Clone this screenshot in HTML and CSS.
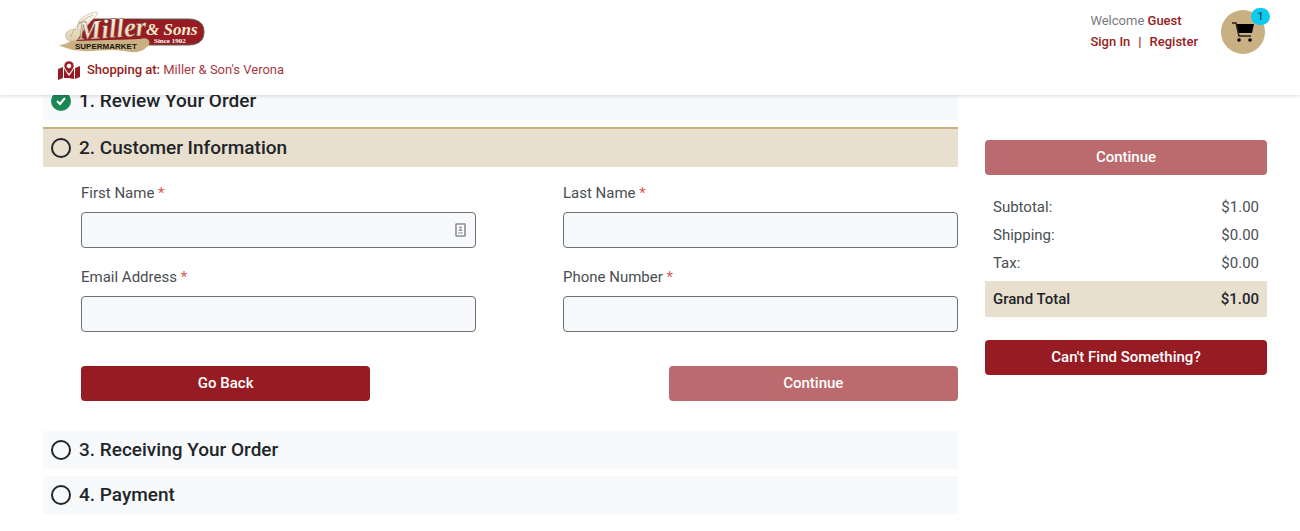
FILE: index.html
```html
<!DOCTYPE html>
<html lang="en">
<head>
  <meta charset="UTF-8">
  <meta name="viewport" content="width=device-width, initial-scale=1.0">
  <title>Checkout - Miller &amp; Sons Supermarket</title>
  <link rel="stylesheet" href="styles.css">
</head>
<body>
  <header class="header">
    <div class="header__brand">
      <a href="/" class="logo" aria-label="Miller &amp; Sons Supermarket">
        <svg width="148" height="44" viewBox="0 0 148 44">
          <defs>
            <linearGradient id="cream" x1="0" y1="0" x2="0" y2="1">
              <stop offset="0" stop-color="#fffdf6" />
              <stop offset="1" stop-color="#dccba8" />
            </linearGradient>
          </defs>
          <path d="M36 9H130C141 9 146 14 146 22C146 30 141 35 130 35H30Z" fill="#971b22" stroke="#56644f" />
          <path d="M1 35C8 35 12 30 20 30L82 29C91 26 94 33 89 37C83 43 75 43 66 41C45 37 24 47 1 35Z" fill="#c9b083" />
          <path d="M26 12L36 9H82V29L18 31Z" fill="#971b22" />
          <path d="M8 27C6 21 14 18 20 20C17 12 26 4 38 2C40 2 40 4 37 7C31 13 25 20 20 29C16 33 9 32 8 27Z" fill="url(#cream)" stroke="#b7a88b" stroke-width="0.6" />
          <path d="M13 27C14 20 24 9 35 5" fill="none" stroke="#b7a88b" stroke-width="0.8" />
          <text class="logo__miller" x="20" y="30" transform="rotate(-4 20 30)">Miller</text>
          <text class="logo__sons" x="88" y="25">&amp; Sons</text>
          <text class="logo__since" x="96" y="33">Since 1902</text>
          <text class="logo__market" x="17" y="39">SUPERMARKET</text>
        </svg>
      </a>
      <a href="/stores" class="store">
        <svg width="22" height="19" viewBox="0 0 22 19" fill="#971b22">
          <path d="M0 8L5 6V17L0 19Z" />
          <path d="M17 7L22 5V16L17 18Z" />
          <path d="M6 7C7 10 9 12 11 15C13 12 15 10 16 7V18L11 17L6 17Z" />
          <path fill-rule="evenodd" d="M11 0C8 0 6 2 6 5C6 7 9 11 11 13C13 11 16 7 16 5C16 2 14 0 11 0ZM11 3A2 2 0 1 1 11 7A2 2 0 1 1 11 3Z" stroke="#fff" stroke-width="0.6" />
        </svg>
        <span><b>Shopping at:</b> Miller &amp; Son's Verona</span>
      </a>
    </div>
    <div class="header__user">
      <div class="account">
        <p>Welcome <b>Guest</b></p>
        <p class="account__links"><a href="/signin">Sign In</a><span>|</span><a href="/register">Register</a></p>
      </div>
      <a href="/cart" class="cart" aria-label="Cart">
        <svg width="23" height="20" viewBox="0 0 23 20">
          <path d="M4 2H22L20 11H6Z" fill="#000" />
          <path d="M0 1H4L7 14H19" fill="none" stroke="#2a2118" stroke-width="1.4" />
          <circle cx="7" cy="18" r="1.8" />
          <circle cx="18" cy="18" r="1.8" />
        </svg>
        <span class="cart__count">1</span>
      </a>
    </div>
  </header>

  <main class="checkout">
    <div class="steps">
      <h2 class="step">
        <svg width="20" height="20" viewBox="0 0 20 20">
          <circle cx="10" cy="10" r="10" fill="#198754" />
          <path d="M6 10L9 13L14 7" fill="none" stroke="#fff" stroke-width="2" />
        </svg>
        1. Review Your Order
      </h2>
      <section>
        <h2 class="step active"><span class="step__circle"></span>2. Customer Information</h2>
        <form class="customer">
          <div class="customer__fields">
            <div class="field">
              <label for="firstName">First Name <span>*</span></label>
              <div class="field__box">
                <input type="text" id="firstName">
                <svg class="field__icon" width="11" height="14" viewBox="0 0 11 14">
                  <rect x="1" y="1" width="9" height="12" rx="0.5" fill="#fff" stroke="#8b8d90" stroke-width="1.6" />
                  <circle cx="5.5" cy="4.4" r="1.2" fill="#8b8d90" />
                  <path d="M3.5 8C3.5 5.5 7.5 5.5 7.5 8ZM3 9.5H8V10.5H3Z" fill="#8b8d90" />
                </svg>
              </div>
            </div>
            <div class="field">
              <label for="lastName">Last Name <span>*</span></label>
              <input type="text" id="lastName">
            </div>
            <div class="field">
              <label for="email">Email Address <span>*</span></label>
              <input type="email" id="email">
            </div>
            <div class="field">
              <label for="phone">Phone Number <span>*</span></label>
              <input type="tel" id="phone">
            </div>
          </div>
          <div class="customer__btns">
            <button type="button" class="btn">Go Back</button>
            <button type="submit" class="btn" disabled>Continue</button>
          </div>
        </form>
      </section>
      <h2 class="step"><span class="step__circle"></span>3. Receiving Your Order</h2>
      <h2 class="step"><span class="step__circle"></span>4. Payment</h2>
    </div>

    <aside class="summary">
      <button type="button" class="btn" disabled>Continue</button>
      <table class="totals">
        <tbody>
          <tr><th scope="row">Subtotal:</th><td>$1.00</td></tr>
          <tr><th scope="row">Shipping:</th><td>$0.00</td></tr>
          <tr><th scope="row">Tax:</th><td>$0.00</td></tr>
        </tbody>
        <tfoot>
          <tr><th scope="row">Grand Total</th><td>$1.00</td></tr>
        </tfoot>
      </table>
      <button type="button" class="btn">Can't Find Something?</button>
    </aside>
  </main>
</body>
</html>
```
FILE: styles.css
```css
/* reset */
* {
  margin: 0;
  padding: 0;
  box-sizing: border-box;
}
body {
  font-family: Roboto, "Liberation Sans", sans-serif;
  font-size: 15px;
  line-height: 20px;
  color: #4a4e52;
  background-color: #fff;
}
a {
  color: #971b22;
  text-decoration: none;
}
b {
  font-weight: 500;
}
svg {
  display: block;
  flex-shrink: 0;
}

/* header */
.header {
  position: sticky;
  top: 0;
  z-index: 10;
  display: flex;
  justify-content: space-between;
  padding: 10px 35px 15px 58px;
  font-size: 13px;
  background-color: #fff;
  box-shadow: 0 1px 4px rgba(0, 0, 0, 0.15);
}
.header__brand {
  display: flex;
  flex-direction: column;
  gap: 6px;
}
.logo__miller {
  font: italic bold 27px "Liberation Serif", serif;
  fill: url(#cream);
  stroke: #6b4a35;
  stroke-width: 0.4px;
}
.logo__sons {
  font: italic bold 17px "Liberation Serif", serif;
  fill: #f6ead2;
}
.logo__since {
  font: bold 7px "Liberation Serif", serif;
  fill: #fff;
}
.logo__market {
  font: bold 8px "Liberation Sans", sans-serif;
  fill: #1c1712;
}
.store {
  display: flex;
  align-items: center;
  gap: 7px;
  color: #a8393f;
}
.store b {
  color: #971b22;
}
.header__user {
  display: flex;
  align-items: flex-start;
  gap: 23px;
}
.account {
  line-height: 21px;
  color: #777b7f;
}
.account b {
  color: #971b22;
}
.account__links {
  display: flex;
  gap: 8px;
  color: #971b22;
  font-weight: 500;
}
.cart {
  position: relative;
  display: flex;
  align-items: center;
  justify-content: center;
  width: 44px;
  height: 44px;
  border-radius: 50%;
  background-color: #c9b083;
}
.cart__count {
  position: absolute;
  top: -2px;
  right: -5px;
  width: 19px;
  height: 17px;
  border-radius: 9px;
  font-size: 11px;
  line-height: 17px;
  text-align: center;
  color: #212529;
  background-color: #0dcaf0;
}

/* checkout, scrolled a little under the header */
.checkout {
  display: grid;
  grid-template-columns: minmax(0, 1fr) 282px;
  align-items: start;
  gap: 27px;
  margin-top: -13px;
  padding: 0 33px 16px 43px;
}
.steps {
  display: flex;
  flex-direction: column;
  gap: 7px;
}
.step {
  display: flex;
  align-items: center;
  gap: 8px;
  padding: 8px;
  font-size: 19px;
  line-height: 22px;
  font-weight: 500;
  color: #212529;
  background-color: #f8f9fb;
}
.step.active {
  border-top: 2px solid #c9b083;
  background-color: #e8dfcf;
}
.step__circle {
  width: 20px;
  height: 20px;
  border: 2px solid #212529;
  border-radius: 50%;
}

/* customer form */
.customer {
  padding: 16px 0 23px 38px;
}
.customer__fields {
  display: grid;
  grid-template-columns: 1fr 1fr;
  gap: 19px 87px;
}
.field label {
  display: block;
  margin-bottom: 9px;
}
.field label span {
  color: #dc5a50;
}
.field input {
  display: block;
  width: 100%;
  height: 36px;
  padding: 6px 12px;
  border: 1px solid #6c7075;
  border-radius: 4px;
  font: inherit;
  background-color: #f8f9fb;
}
.field__box {
  position: relative;
}
.field__icon {
  position: absolute;
  top: 11px;
  right: 10px;
}
.customer__btns {
  display: flex;
  justify-content: space-between;
  margin-top: 34px;
}
.customer__btns .btn {
  width: 33%;
}
.btn {
  width: 100%;
  height: 35px;
  padding-bottom: 2px;
  border: 0;
  border-radius: 4px;
  font: inherit;
  font-weight: 500;
  color: #fff;
  background-color: #971b22;
}
.btn:disabled {
  opacity: 0.65;
}

/* summary */
.summary {
  padding-top: 58px;
}
.totals {
  width: 100%;
  margin: 18px 0 23px;
  border-collapse: collapse;
}
.totals th {
  padding: 4px 8px;
  font-weight: 400;
  text-align: left;
}
.totals td {
  padding: 4px 8px;
  text-align: right;
}
.totals tbody tr:last-child > * {
  padding-bottom: 8px;
}
.totals tfoot th,
.totals tfoot td {
  height: 36px;
  font-weight: 500;
  color: #212529;
  background-color: #e8dfcf;
}
```
